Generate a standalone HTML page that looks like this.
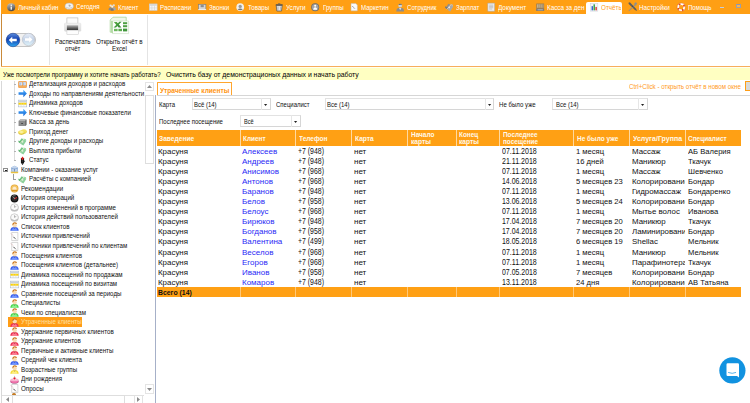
<!DOCTYPE html>
<html lang="ru"><head><meta charset="utf-8"><title>Утраченные клиенты</title>
<style>
html,body{margin:0;padding:0;}
body{width:750px;height:403px;overflow:hidden;background:#fff;position:relative;font-family:"Liberation Sans",sans-serif;}
.t{position:absolute;white-space:nowrap;transform-origin:0 50%;}
svg{position:absolute;overflow:visible;}
.cell{position:absolute;overflow:hidden;white-space:nowrap;}
</style></head><body>

<div style="position:absolute;left:1px;top:0px;width:749px;height:14.2px;background:#FF9F14;"></div>
<div style="position:absolute;left:585.8px;top:1.6px;width:36px;height:13px;background:#fff;border-radius:2px 2px 0 0;"></div>
<span class="t " style="left:17.6px;top:4px;font-size:7.12px;line-height:8px;color:#FFFFFF;transform:scaleX(0.8716);">Личный кабин</span>
<span class="t " style="left:75.5px;top:3px;font-size:7.12px;line-height:8px;color:#FFFFFF;transform:scaleX(0.8685);">Сегодня</span>
<span class="t " style="left:118.4px;top:4px;font-size:7.12px;line-height:8px;color:#FFFFFF;transform:scaleX(0.8663);">Клиент</span>
<span class="t " style="left:159.6px;top:4px;font-size:7.12px;line-height:8px;color:#FFFFFF;transform:scaleX(0.8840);">Расписани</span>
<span class="t " style="left:209.3px;top:4px;font-size:7.12px;line-height:8px;color:#FFFFFF;transform:scaleX(0.8788);">Звонки</span>
<span class="t " style="left:247.5px;top:4px;font-size:7.12px;line-height:8px;color:#FFFFFF;transform:scaleX(0.8656);">Товары</span>
<span class="t " style="left:285.9px;top:4px;font-size:7.12px;line-height:8px;color:#FFFFFF;transform:scaleX(0.8952);">Услуги</span>
<span class="t " style="left:322.7px;top:4px;font-size:7.12px;line-height:8px;color:#FFFFFF;transform:scaleX(0.8683);">Группы</span>
<span class="t " style="left:360.5px;top:4px;font-size:7.12px;line-height:8px;color:#FFFFFF;transform:scaleX(0.8620);">Маркетин</span>
<span class="t " style="left:406.7px;top:4px;font-size:7.12px;line-height:8px;color:#FFFFFF;transform:scaleX(0.8529);">Сотрудник</span>
<span class="t " style="left:455.5px;top:4px;font-size:7.12px;line-height:8px;color:#FFFFFF;transform:scaleX(0.8536);">Зарплат</span>
<span class="t " style="left:498px;top:4px;font-size:7.12px;line-height:8px;color:#FFFFFF;transform:scaleX(0.8928);">Документ</span>
<span class="t " style="left:546.7px;top:4px;font-size:7.12px;line-height:8px;color:#FFFFFF;transform:scaleX(0.8841);">Касса за ден</span>
<span class="t " style="left:639.3px;top:4px;font-size:7.12px;line-height:8px;color:#FFFFFF;transform:scaleX(0.8822);">Настройки</span>
<span class="t " style="left:688px;top:4px;font-size:7.12px;line-height:8px;color:#FFFFFF;transform:scaleX(0.8546);">Помощь</span>
<div style="position:absolute;left:600.8px;top:0;width:20.7px;height:14px;overflow:hidden;">
<span class="t " style="left:0px;top:4px;font-size:7.12px;line-height:8px;color:#FF9D16;transform:scaleX(0.8848);">Отчёты</span>
</div>
<svg style="left:6.9px;top:3.1px" width="8.4" height="8.4" viewBox="0 0 16 16"><defs><linearGradient id="gi" x1="0" y1="0" x2="0.3" y2="1"><stop offset="0" stop-color="#C8C8C8"/><stop offset="0.5" stop-color="#8A8A8A"/><stop offset="1" stop-color="#4E4E4E"/></linearGradient></defs><circle cx="8" cy="8" r="7.700" fill="url(#gi)"/><rect x="6.900" y="6.800" width="2.400" height="6" fill="#fff"/><circle cx="8.100" cy="4.300" r="1.400" fill="#fff"/></svg>
<svg style="left:64.8px;top:2.1px" width="8.4" height="8.4" viewBox="0 0 16 16"><ellipse cx="8" cy="8" rx="8" ry="6" fill="#F2F2F2" stroke="#B0B0B0" stroke-width="1"/><path d="M8 8V5M8 8l3-1" stroke="#777" stroke-width="1.200" fill="none"/><path d="M2 10q6 4 12 0" stroke="#C8C8C8" stroke-width="1.500" fill="none"/></svg>
<svg style="left:107.6px;top:3.3px" width="8.4" height="8.4" viewBox="0 0 16 16"><circle cx="5" cy="5" r="2.200" fill="#E6E6E6"/><circle cx="11" cy="4.500" r="2.200" fill="#DADADA"/><path d="M1 14c0-4 1.500-6 4-6s4 2 4 6z" fill="#8A8A8A"/><path d="M7.500 14c0-4 1.500-6.500 4-6.500s3.500 2.500 3.500 6.500z" fill="#A5A5A5"/><circle cx="8" cy="7" r="2" fill="#F0F0F0"/><path d="M5 15c0-3 1-5 3-5s3 2 3 5z" fill="#777"/></svg>
<svg style="left:148.8px;top:2.9px" width="8.4" height="8.4" viewBox="0 0 16 16"><rect x="0.500" y="1.700" width="15" height="12.600" fill="#FCFCFC" stroke="#C2C2C2" stroke-width="1"/><rect x="1" y="2.200" width="14" height="3" fill="#D2D2D2"/><path d="M5.500 5v9M10.500 5v9M1 8.200h14M1 11.200h14" stroke="#C8C8C8" stroke-width="0.900"/></svg>
<svg style="left:198.0px;top:2.7px" width="8.4" height="8.4" viewBox="0 0 16 16"><rect x="1" y="2.500" width="14" height="9.500" fill="#D6D6D6" stroke="#7C7C7C" stroke-width="1.200"/><rect x="5" y="4" width="6" height="4" fill="#8A8A8A"/><rect x="0.500" y="11.500" width="15" height="2" fill="#F0F0F0"/></svg>
<svg style="left:235.8px;top:3.3px" width="8.4" height="8.4" viewBox="0 0 16 16"><circle cx="8" cy="8" r="7.300" fill="#F0F0F0"/><circle cx="8" cy="6.500" r="3.200" fill="#9A9A9A"/><path d="M3 12q5 3.500 10 0q-5 -3-10 0z" fill="#777"/></svg>
<svg style="left:274.5px;top:3.0px" width="8.4" height="8.4" viewBox="0 0 16 16"><path d="M2.300 4.500h11.400l-1.200 10.800h-9z" fill="#DADADA" stroke="#505050" stroke-width="1.300"/><rect x="1.300" y="2.600" width="13.400" height="2.200" rx="0.600" fill="#505050"/><rect x="5.800" y="0.800" width="4.400" height="2" fill="#606060"/><path d="M6 7v6M10 7v6" stroke="#8A8A8A" stroke-width="1"/><path d="M8 6.500v7" stroke="#F4F4F4" stroke-width="1.600"/></svg>
<svg style="left:311.3px;top:3.1px" width="8.4" height="8.4" viewBox="0 0 16 16"><circle cx="8" cy="8" r="7.600" fill="#6A6A6A"/><circle cx="8" cy="8" r="6.200" fill="#A2A2A2"/><circle cx="8" cy="5.300" r="1.900" fill="#fff"/><path d="M4.300 12.800c0-3.200 1.500-4.800 3.700-4.800s3.700 1.600 3.700 4.800z" fill="#fff"/></svg>
<svg style="left:350.0px;top:3.1px" width="8.4" height="8.4" viewBox="0 0 16 16"><path d="M2 1h9l3 3v11H2z" fill="#FBFBFB" stroke="#BDBDBD" stroke-width="0.900"/><path d="M4.500 6l3 3" stroke="#666" stroke-width="1.400"/><path d="M7 10.500h3" stroke="#999" stroke-width="1"/></svg>
<svg style="left:395.5px;top:2.9px" width="8.4" height="8.4" viewBox="0 0 16 16"><circle cx="8" cy="4.800" r="3.600" fill="#D4D4D4"/><path d="M4.500 4.200a3.600 3.600 0 0 1 7 0q-3.500-2-7 0z" fill="#6A6A6A"/><path d="M0.500 16c0-5.300 3-7 7.500-7s7.500 1.700 7.500 7z" fill="#8C8C8C"/><path d="M5.800 9.500l2.200 4.500l2.200-4.500z" fill="#E2E2E2"/></svg>
<svg style="left:444.5px;top:3.0px" width="8.4" height="8.4" viewBox="0 0 16 16"><path d="M1 9.500L6.500 1.500l4.500 2.500L5.500 12.500z" fill="#8E8E8E"/><path d="M5 13.500L11 4l4.800 2.800L10 16z" fill="#A8A8A8"/><path d="M0.500 6l5.500 3l-1.500 3l-4.500-2.800z" fill="#7A7A7A"/><path d="M9.500 1.500l6 2l-1 3.500z" fill="#B8B8B8"/><path d="M3.500 12L11.500 3" stroke="#E4E4E4" stroke-width="1.300"/><circle cx="8" cy="8.500" r="1.600" fill="#E8E8E8"/></svg>
<svg style="left:487.2px;top:2.9px" width="8.4" height="8.4" viewBox="0 0 16 16"><path d="M1.500 0.300h13v15.400h-13z" fill="#EFEFEF" stroke="#A4A4A4" stroke-width="1"/><path d="M4 4h8M4 6.500h8M4 9h8M4 11.500h6" stroke="#A6A6A6" stroke-width="1.100"/></svg>
<svg style="left:536.0px;top:3.1px" width="8.4" height="8.4" viewBox="0 0 16 16"><rect x="0.500" y="1" width="15" height="14" fill="#9B7E55"/><rect x="2" y="2.500" width="12" height="6.500" fill="#C9B48E"/><path d="M5.500 2.500v6.500M9 2.500v6.500M12 2.500v6.500" stroke="#8A7048" stroke-width="1"/><rect x="0.500" y="11" width="15" height="4" fill="#7C7C7C"/><rect x="3" y="12.300" width="10" height="1.400" fill="#C8C8C8"/></svg>
<svg style="left:590.0px;top:3.3px" width="8.4" height="8.4" viewBox="0 0 16 16"><rect x="1" y="0.500" width="14" height="15" fill="#F4F6FA" stroke="#C8CCD6" stroke-width="0.800"/><rect x="3" y="6" width="2.600" height="8" fill="#2B5FCB"/><rect x="6.700" y="2.500" width="2.600" height="11.500" fill="#2E9B3A"/><rect x="10.400" y="7.500" width="2.600" height="6.500" fill="#D8332B"/></svg>
<svg style="left:627.8px;top:2.4px" width="9.6" height="9.6" viewBox="0 0 16 16"><path d="M0.800 1.200l2.400-0.700l10.300 10.800l1.700 3.700l-3.700-1.700L1.200 3.500z" fill="#5E5E5E"/><path d="M15.200 1.500l-2.800-1l-2.200 2.600l0.600 1.400l-9 9l-1.300 2l2.200-0.800l9.200-9l1.500 0.400z" fill="#8E8E8E"/><circle cx="8" cy="7.600" r="1.300" fill="#4A4A4A"/></svg>
<svg style="left:676.8px;top:3.2px" width="8.4" height="8.4" viewBox="0 0 16 16"><circle cx="8" cy="8" r="6" fill="none" stroke="#fff" stroke-width="3.600"/><path d="M3.800 3.800A6 6 0 0 1 6.500 2.200" stroke="#E24A1A" stroke-width="3.600" fill="none"/><path d="M12.200 3.800A6 6 0 0 1 13.800 6.500" stroke="#E24A1A" stroke-width="3.600" fill="none"/><path d="M12.200 12.200A6 6 0 0 1 9.500 13.800" stroke="#E24A1A" stroke-width="3.600" fill="none"/><path d="M3.800 12.200A6 6 0 0 1 2.200 9.500" stroke="#E24A1A" stroke-width="3.600" fill="none"/><circle cx="8" cy="8" r="7.800" fill="none" stroke="#D8541E" stroke-width="0.700"/></svg>
<div style="position:absolute;left:720.1px;top:7.2px;width:4.4px;height:1.2px;background:#C4CCDC;"></div>
<div style="position:absolute;left:735.7px;top:4.2px;width:4.9px;height:3.7px;border:0.7px solid #9A9FAE;border-top:1.4px solid #8A96B4;box-sizing:border-box;background:#FFB347;"></div>
<div style="position:absolute;left:0px;top:14.2px;width:750px;height:51.6px;background:#fff;"></div>
<div style="position:absolute;left:1px;top:14.2px;width:1.2px;height:52px;background:#C98A3A;"></div>
<div style="position:absolute;left:1px;top:65.6px;width:749px;height:1.1px;background:#F7AE5C;"></div>
<div style="position:absolute;left:49px;top:15px;width:0.8px;height:50px;background:#E4E4E4;"></div>
<div style="position:absolute;left:147px;top:15px;width:0.8px;height:50px;background:#E4E4E4;"></div>
<span class="t " style="left:54.5px;top:38px;font-size:7.01px;line-height:7px;color:#111;transform:scaleX(0.8802);">Распечатать</span>
<span class="t " style="left:64.9px;top:45px;font-size:7.01px;line-height:7px;color:#111;transform:scaleX(0.8692);">отчёт</span>
<span class="t " style="left:96.3px;top:38px;font-size:7.01px;line-height:7px;color:#111;transform:scaleX(0.8834);">Открыть отчёт в</span>
<span class="t " style="left:112.2px;top:45px;font-size:7.01px;line-height:7px;color:#111;transform:scaleX(0.8634);">Excel</span>
<div style="position:absolute;left:5.8px;top:32.6px;width:30.4px;height:14px;border-radius:7px;border:0.8px solid #C4C4C4;box-sizing:border-box;background:#F1F1F1;"></div>
<svg style="left:6px;top:32.9px" width="14" height="14" viewBox="0 0 28 28"><defs><linearGradient id="gb" x1="0" y1="0" x2="0" y2="1"><stop offset="0" stop-color="#5E8FE0"/><stop offset="0.45" stop-color="#1140B0"/><stop offset="1" stop-color="#2FA8F0"/></linearGradient></defs><circle cx="14" cy="14" r="13.500" fill="url(#gb)" stroke="#0C2E86" stroke-width="1"/><path d="M5.500 14l7-6.500v4h9v5h-9v4z" fill="#fff"/></svg>
<svg style="left:22.1px;top:33.4px" width="13" height="13" viewBox="0 0 26 26"><defs><linearGradient id="gf" x1="0" y1="0" x2="0" y2="1"><stop offset="0" stop-color="#E8EEF8"/><stop offset="0.5" stop-color="#C4D2E6"/><stop offset="1" stop-color="#DDF3FB"/></linearGradient></defs><circle cx="13" cy="13" r="12.300" fill="url(#gf)" stroke="#B4BBC6" stroke-width="1.200"/><path d="M21 13l-6.500-6v3.700H6v4.600h8.500V19z" fill="#fff"/></svg>
<svg style="left:64px;top:17px" width="18" height="18" viewBox="0 0 180 180"><defs><linearGradient id="gp" x1="0" y1="0" x2="0" y2="1"><stop offset="0" stop-color="#D4D4D4"/><stop offset="0.35" stop-color="#8C8C8C"/><stop offset="1" stop-color="#2C2C2C"/></linearGradient><linearGradient id="gp2" x1="0" y1="0" x2="0" y2="1"><stop offset="0" stop-color="#F2F2F2"/><stop offset="1" stop-color="#DADADA"/></linearGradient></defs><rect x="29" y="9" width="110" height="62" fill="#FCFCFC" stroke="#B4B4B4" stroke-width="6"/><rect x="5" y="62" width="164" height="81" rx="8" fill="url(#gp2)" stroke="#D6D6D6" stroke-width="4"/><rect x="29" y="78" width="112" height="52" fill="url(#gp)"/><rect x="29" y="74" width="112" height="7" fill="#F4F4F4"/><rect x="29" y="132" width="118" height="42" fill="#FDFDFD" stroke="#C4C4C4" stroke-width="5"/></svg>
<svg style="left:109px;top:16px" width="21" height="19" viewBox="0 0 210 190"><defs><linearGradient id="gx" x1="0" y1="0" x2="1" y2="1"><stop offset="0" stop-color="#5FB04A"/><stop offset="1" stop-color="#2E7D2E"/></linearGradient></defs><path d="M12 40L40 12H172V150L150 162H12z" fill="#F0F8EC" stroke="#9FD08C" stroke-width="7"/><path d="M36 50H196V176H36z" fill="#FFFFFF" stroke="#BBD9B0" stroke-width="5"/><path d="M22 48L36 50V176L22 160z" fill="#A7D596"/><path d="M48 60L78 60L124 114L96 114z" fill="url(#gx)"/><path d="M104 58L126 58L70 116L46 116z" fill="#3F9A3A"/><rect x="140" y="62" width="42" height="20" fill="#4FA044"/><rect x="140" y="92" width="42" height="20" fill="#4FA044"/><rect x="50" y="128" width="36" height="24" fill="#6DB85E"/><rect x="94" y="128" width="36" height="24" fill="#5AAC4C"/><rect x="140" y="126" width="42" height="28" fill="#3F953A"/></svg>
<div style="position:absolute;left:0px;top:68px;width:750px;height:12px;background:#FFFFC2;"></div>
<div style="position:absolute;left:0px;top:67px;width:750px;height:1px;background:#FFFFEE;"></div>
<span class="t " style="left:3.2px;top:71px;font-size:7.01px;line-height:7px;color:#000;transform:scaleX(0.8839);">Уже посмотрели программу и хотите начать работать?</span>
<span class="t " style="left:166px;top:70px;font-size:7.54px;line-height:9px;color:#000;transform:scaleX(0.9100);">Очистить базу от демонстрационых данных и начать работу</span>
<div style="position:absolute;left:1px;top:80.5px;width:0.7px;height:325px;background:#D8D8D8;"></div>
<div style="position:absolute;left:155.4px;top:95px;width:0.9px;height:310px;background:#A6B0C8;"></div>
<div style="position:absolute;left:8.4px;top:317.45px;width:73.4px;height:9.2px;background:#FF9D16;"></div>
<svg style="left:17.5px;top:79.8px" width="9" height="9" viewBox="0 0 16 16"><rect x="0.500" y="2.300" width="15" height="11.400" rx="0.800" fill="#EC8C28"/><rect x="2" y="3.800" width="5.600" height="6" fill="#D4E2F6"/><rect x="8.400" y="3.800" width="5.600" height="6" fill="#D4E2F6"/><rect x="3" y="4.500" width="1.500" height="4.500" fill="#8FB0E0"/><rect x="9.400" y="4.500" width="1.500" height="4.500" fill="#8FB0E0"/><rect x="1.500" y="10.800" width="13" height="1.200" fill="#FFC070"/></svg>
<svg style="left:17.5px;top:89.31px" width="9" height="9" viewBox="0 0 16 16"><defs><linearGradient id="ga" x1="0" y1="0" x2="0" y2="1"><stop offset="0" stop-color="#4DB0FF"/><stop offset="1" stop-color="#0F5FD0"/></linearGradient></defs><path d="M1 5.600h8.500V1.300L15.800 8l-6.300 6.700v-4.300H1z" fill="url(#ga)"/></svg>
<svg style="left:17.5px;top:98.82px" width="9" height="9" viewBox="0 0 16 16"><rect x="0.500" y="2" width="15" height="12" fill="#FFFFFF" stroke="#A8B6CA" stroke-width="1"/><rect x="1" y="2.500" width="14" height="3.300" fill="#C6D0DE"/><rect x="1" y="6.500" width="14" height="3.800" fill="#FFD500"/><path d="M5.600 2.500v11M10.400 2.500v11" stroke="#E4D9B8" stroke-width="0.900"/><path d="M1 6.200h14M1 10.600h14" stroke="#D8DEE8" stroke-width="0.700"/></svg>
<svg style="left:17.5px;top:108.34px" width="9" height="9" viewBox="0 0 16 16"><defs><linearGradient id="ga" x1="0" y1="0" x2="0" y2="1"><stop offset="0" stop-color="#4DB0FF"/><stop offset="1" stop-color="#0F5FD0"/></linearGradient></defs><path d="M1 5.600h8.500V1.300L15.800 8l-6.300 6.700v-4.300H1z" fill="url(#ga)"/></svg>
<svg style="left:17.5px;top:117.85px" width="9" height="9" viewBox="0 0 16 16"><path d="M1 5.500L4 2.800h11v9.700L12.500 14H1z" fill="#8C8C8C"/><path d="M1 5.500L4 2.800h11l-2.500 2.700z" fill="#B4B4B4"/><path d="M12.500 5.500L15 2.800v9.700L12.500 14z" fill="#6E6E6E"/><rect x="6" y="9" width="2.500" height="1.600" fill="#2E2E2E"/></svg>
<svg style="left:17.5px;top:127.36px" width="9" height="9" viewBox="0 0 16 16"><ellipse cx="10.500" cy="8.500" rx="5" ry="3.300" fill="#D8B818"/><ellipse cx="10.500" cy="7.500" rx="5" ry="3.300" fill="#F4E060"/><ellipse cx="6" cy="10.200" rx="5.300" ry="3.400" fill="#D0B010"/><ellipse cx="6" cy="9" rx="5.300" ry="3.400" fill="#F6E468"/><ellipse cx="6" cy="8.800" rx="3.200" ry="1.800" fill="#FBF0A0"/></svg>
<svg style="left:17.5px;top:136.87px" width="9" height="9" viewBox="0 0 16 16"><path d="M1.500 9.500L6.500 2l4 2.500L5.500 12z" fill="#74C486"/><path d="M5 12.500L10.500 4l4.500 2.500L9.500 15z" fill="#8CD09A"/><path d="M1 6l5 3l-1.500 2.500l-4-2.500z" fill="#62B676"/><path d="M9 2.500l5.500 1.500l-1 3z" fill="#9AD8A6"/><path d="M3.500 11.500L11 3" stroke="#F0F0D0" stroke-width="1.300"/><circle cx="8" cy="8.500" r="1.600" fill="#E4F4DE"/></svg>
<svg style="left:17.5px;top:146.38px" width="9" height="9" viewBox="0 0 16 16"><path d="M1.500 9.500L6.500 2l4 2.500L5.500 12z" fill="#74C486"/><path d="M5 12.500L10.500 4l4.500 2.500L9.500 15z" fill="#8CD09A"/><path d="M1 6l5 3l-1.500 2.500l-4-2.500z" fill="#62B676"/><path d="M9 2.500l5.500 1.500l-1 3z" fill="#9AD8A6"/><path d="M3.500 11.500L11 3" stroke="#F0F0D0" stroke-width="1.300"/><circle cx="8" cy="8.500" r="1.600" fill="#E4F4DE"/></svg>
<svg style="left:17.5px;top:155.9px" width="9" height="9" viewBox="0 0 16 16"><rect x="5.200" y="3.500" width="5.600" height="10" rx="1" fill="#151515"/><rect x="7" y="13" width="2" height="2.500" fill="#151515"/><path d="M5.500 4.500L8 1l2.800 3.500z" fill="#E01818"/><circle cx="8" cy="5.300" r="1.600" fill="#E82020"/><circle cx="8" cy="9" r="1.300" fill="#3A3A3A"/><rect x="10.500" y="8.500" width="2" height="1.500" fill="#151515"/></svg>
<svg style="left:9.5px;top:165.41px" width="9" height="9" viewBox="0 0 16 16"><path d="M2 4.500L8 1.500l6 3V12H2z" fill="#8AAAD4"/><path d="M2 4.500L8 1.500l6 3L8 6.500z" fill="#C4D6EE"/><path d="M4 7v4M6 7.500v4M10 7.500v4M12 7v4" stroke="#F2F6FC" stroke-width="1.100"/><path d="M8 6.500V12" stroke="#5C7CAC" stroke-width="0.800"/><path d="M0.800 12h14.400l-1.500 2.500H2.300z" fill="#E8C040"/></svg>
<svg style="left:17.5px;top:174.92px" width="9" height="9" viewBox="0 0 16 16"><path d="M1.500 9.500L6.500 2l4 2.500L5.500 12z" fill="#74C486"/><path d="M5 12.500L10.500 4l4.500 2.500L9.500 15z" fill="#8CD09A"/><path d="M1 6l5 3l-1.500 2.500l-4-2.500z" fill="#62B676"/><path d="M9 2.500l5.500 1.500l-1 3z" fill="#9AD8A6"/><path d="M3.500 11.500L11 3" stroke="#F0F0D0" stroke-width="1.300"/><circle cx="8" cy="8.500" r="1.600" fill="#E4F4DE"/></svg>
<svg style="left:9.5px;top:184.43px" width="9" height="9" viewBox="0 0 16 16"><circle cx="8" cy="8" r="7" fill="#E6A83A"/><circle cx="8" cy="8" r="5.600" fill="#F4C868"/><path d="M4.300 10.500c0-3.500 1.500-5.500 3.700-5.500s3.700 2 3.700 5.500z" fill="#FCEBD0"/><rect x="3.500" y="10.300" width="9" height="2.200" rx="0.500" fill="#D89828"/></svg>
<svg style="left:9.5px;top:193.94px" width="9" height="9" viewBox="0 0 16 16"><circle cx="8" cy="8" r="7" fill="#0E0E0E"/><circle cx="8" cy="8" r="5" fill="#2C2C2C"/><path d="M3 5.500a6 6 0 0 1 7-3" stroke="#9A9A9A" stroke-width="1" fill="none"/><path d="M7.500 8.800L12.500 6" stroke="#F02020" stroke-width="1.600"/><path d="M8 8.500L6 5" stroke="#fff" stroke-width="1"/></svg>
<svg style="left:9.5px;top:203.46px" width="9" height="9" viewBox="0 0 16 16"><ellipse cx="8" cy="8.300" rx="7.400" ry="7" fill="#C4C4C4"/><ellipse cx="8" cy="7.600" rx="6.600" ry="6.100" fill="#FAFAFA" stroke="#B0B0B0" stroke-width="0.800"/><path d="M8 7.800V4M8 7.800l3.200 -2" stroke="#8A8A8A" stroke-width="1.100" fill="none"/><path d="M2.500 11.500q5.500 4 11 0" stroke="#A8A8A8" stroke-width="1.200" fill="none"/></svg>
<svg style="left:9.5px;top:212.97px" width="9" height="9" viewBox="0 0 16 16"><ellipse cx="8" cy="8.300" rx="7.400" ry="7" fill="#C4C4C4"/><ellipse cx="8" cy="7.600" rx="6.600" ry="6.100" fill="#FAFAFA" stroke="#B0B0B0" stroke-width="0.800"/><path d="M8 7.800V4M8 7.800l3.200 -2" stroke="#8A8A8A" stroke-width="1.100" fill="none"/><path d="M2.500 11.500q5.500 4 11 0" stroke="#A8A8A8" stroke-width="1.200" fill="none"/></svg>
<svg style="left:9.5px;top:222.48px" width="9" height="9" viewBox="0 0 16 16"><path d="M0.500 15.500c0.300-3.500 2-5.500 4.500-6h6c2.500 0.500 4.200 2.500 4.500 6z" fill="#3C62F0"/><path d="M3 15.500c0.500-2.500 1.500-4 3-4.500h4c1.500 0.500 2.500 2 3 4.500z" fill="#7FA0FF" opacity="0.8"/><path d="M6 9.500l2.200 2.500l2.200-2.500z" fill="#1B3FB8"/><ellipse cx="8.400" cy="5.600" rx="3.700" ry="4" fill="#FADCB4"/><path d="M4.300 6.200c-0.600-3.600 1.600-5.600 4.400-5.600c2.400 0 3.700 1.300 3.600 3c-1.800-0.200-3.300-0.600-4.600-1.600c-0.800 1.400-2 2.800-3.400 4.200z" fill="#C8761C"/></svg>
<svg style="left:9.5px;top:231.99px" width="9" height="9" viewBox="0 0 16 16"><path d="M3 0.800h11v14.400H3z" fill="#FEFEFE" stroke="#B4B4B4" stroke-width="0.900"/><path d="M1 2.500l5 4" stroke="#D8A8A8" stroke-width="0.900"/><path d="M6 8.500l3.500 3.500" stroke="#303030" stroke-width="1.600"/><path d="M10 12.500l1 1" stroke="#888" stroke-width="1"/></svg>
<svg style="left:9.5px;top:241.5px" width="9" height="9" viewBox="0 0 16 16"><path d="M3 0.800h11v14.400H3z" fill="#FEFEFE" stroke="#B4B4B4" stroke-width="0.900"/><path d="M1 2.500l5 4" stroke="#D8A8A8" stroke-width="0.900"/><path d="M6 8.500l3.500 3.500" stroke="#303030" stroke-width="1.600"/><path d="M10 12.500l1 1" stroke="#888" stroke-width="1"/></svg>
<svg style="left:9.5px;top:251.02px" width="9" height="9" viewBox="0 0 16 16"><path d="M0.500 15.500c0.300-3.500 2-5.500 4.500-6h6c2.500 0.500 4.200 2.500 4.500 6z" fill="#3C62F0"/><path d="M3 15.500c0.500-2.500 1.500-4 3-4.500h4c1.500 0.500 2.500 2 3 4.500z" fill="#7FA0FF" opacity="0.8"/><path d="M6 9.500l2.200 2.500l2.200-2.500z" fill="#1B3FB8"/><ellipse cx="8.400" cy="5.600" rx="3.700" ry="4" fill="#FADCB4"/><path d="M4.300 6.200c-0.600-3.600 1.600-5.600 4.400-5.600c2.400 0 3.700 1.300 3.600 3c-1.800-0.200-3.300-0.600-4.600-1.600c-0.800 1.400-2 2.800-3.400 4.200z" fill="#C8761C"/></svg>
<svg style="left:9.5px;top:260.53px" width="9" height="9" viewBox="0 0 16 16"><path d="M0.500 15.500c0.300-3.500 2-5.500 4.500-6h6c2.500 0.500 4.200 2.500 4.500 6z" fill="#3C62F0"/><path d="M3 15.500c0.500-2.500 1.500-4 3-4.500h4c1.500 0.500 2.500 2 3 4.500z" fill="#7FA0FF" opacity="0.8"/><path d="M6 9.500l2.200 2.500l2.200-2.500z" fill="#1B3FB8"/><ellipse cx="8.400" cy="5.600" rx="3.700" ry="4" fill="#FADCB4"/><path d="M4.300 6.200c-0.600-3.600 1.600-5.600 4.400-5.600c2.400 0 3.700 1.300 3.600 3c-1.800-0.200-3.300-0.600-4.600-1.600c-0.800 1.400-2 2.800-3.400 4.200z" fill="#C8761C"/></svg>
<svg style="left:9.5px;top:270.04px" width="9" height="9" viewBox="0 0 16 16"><rect x="0.500" y="2" width="15" height="12" fill="#FFFFFF" stroke="#A8B6CA" stroke-width="1"/><rect x="1" y="2.500" width="14" height="3.300" fill="#C6D0DE"/><rect x="1" y="6.500" width="14" height="3.800" fill="#FFD500"/><path d="M5.600 2.500v11M10.400 2.500v11" stroke="#E4D9B8" stroke-width="0.900"/><path d="M1 6.200h14M1 10.600h14" stroke="#D8DEE8" stroke-width="0.700"/></svg>
<svg style="left:9.5px;top:279.55px" width="9" height="9" viewBox="0 0 16 16"><rect x="0.500" y="2" width="15" height="12" fill="#FFFFFF" stroke="#A8B6CA" stroke-width="1"/><rect x="1" y="2.500" width="14" height="3.300" fill="#C6D0DE"/><rect x="1" y="6.500" width="14" height="3.800" fill="#FFD500"/><path d="M5.600 2.500v11M10.400 2.500v11" stroke="#E4D9B8" stroke-width="0.900"/><path d="M1 6.200h14M1 10.600h14" stroke="#D8DEE8" stroke-width="0.700"/></svg>
<svg style="left:9.5px;top:289.06px" width="9" height="9" viewBox="0 0 16 16"><path d="M0.500 15.500c0.300-3.500 2-5.500 4.500-6h6c2.500 0.500 4.200 2.500 4.500 6z" fill="#3C62F0"/><path d="M3 15.500c0.500-2.500 1.500-4 3-4.500h4c1.500 0.500 2.500 2 3 4.500z" fill="#7FA0FF" opacity="0.8"/><path d="M6 9.500l2.200 2.500l2.200-2.500z" fill="#1B3FB8"/><ellipse cx="8.400" cy="5.600" rx="3.700" ry="4" fill="#FADCB4"/><path d="M4.300 6.200c-0.600-3.600 1.600-5.600 4.400-5.600c2.400 0 3.700 1.300 3.600 3c-1.800-0.200-3.300-0.600-4.600-1.600c-0.800 1.400-2 2.800-3.400 4.200z" fill="#C8761C"/></svg>
<svg style="left:9.5px;top:298.58px" width="9" height="9" viewBox="0 0 16 16"><path d="M0.500 15.500c0.300-3.500 2-5.500 4.500-6h6c2.500 0.500 4.200 2.500 4.500 6z" fill="#4FD94F"/><path d="M3 15.500c0.500-2.500 1.500-4 3-4.500h4c1.500 0.500 2.500 2 3 4.500z" fill="#9CF59C" opacity="0.8"/><path d="M6 9.500l2.200 2.500l2.200-2.500z" fill="#2A9A2A"/><ellipse cx="8.400" cy="5.600" rx="3.700" ry="4" fill="#FADCB4"/><path d="M4.300 6.200c-0.600-3.600 1.600-5.600 4.400-5.600c2.400 0 3.700 1.300 3.600 3c-1.800-0.200-3.300-0.600-4.600-1.600c-0.800 1.400-2 2.800-3.400 4.200z" fill="#C8761C"/></svg>
<svg style="left:9.5px;top:308.09px" width="9" height="9" viewBox="0 0 16 16"><path d="M0.500 15.500c0.300-3.500 2-5.500 4.500-6h6c2.500 0.500 4.200 2.500 4.500 6z" fill="#4FD94F"/><path d="M3 15.500c0.500-2.500 1.500-4 3-4.500h4c1.500 0.500 2.500 2 3 4.500z" fill="#9CF59C" opacity="0.8"/><path d="M6 9.500l2.200 2.500l2.200-2.500z" fill="#2A9A2A"/><ellipse cx="8.400" cy="5.600" rx="3.700" ry="4" fill="#FADCB4"/><path d="M4.300 6.200c-0.600-3.600 1.600-5.600 4.400-5.600c2.400 0 3.700 1.300 3.600 3c-1.800-0.200-3.300-0.600-4.600-1.600c-0.800 1.400-2 2.800-3.400 4.200z" fill="#C8761C"/></svg>
<svg style="left:9.5px;top:317.6px" width="9" height="9" viewBox="0 0 16 16"><path d="M0.500 15.500c0.300-3.500 2-5.500 4.500-6h6c2.500 0.500 4.200 2.500 4.500 6z" fill="#EE3352"/><path d="M3 15.500c0.500-2.500 1.500-4 3-4.500h4c1.500 0.500 2.500 2 3 4.500z" fill="#FF8CA0" opacity="0.8"/><path d="M6 9.500l2.200 2.500l2.200-2.500z" fill="#B01030"/><ellipse cx="8.400" cy="5.600" rx="3.700" ry="4" fill="#FADCB4"/><path d="M4.300 6.200c-0.600-3.600 1.600-5.600 4.400-5.600c2.400 0 3.700 1.300 3.600 3c-1.800-0.200-3.300-0.600-4.600-1.600c-0.800 1.400-2 2.800-3.400 4.200z" fill="#C8761C"/></svg>
<svg style="left:9.5px;top:327.11px" width="9" height="9" viewBox="0 0 16 16"><path d="M0.500 15.500c0.300-3.500 2-5.500 4.500-6h6c2.500 0.500 4.200 2.500 4.500 6z" fill="#EE3352"/><path d="M3 15.500c0.500-2.500 1.500-4 3-4.500h4c1.500 0.500 2.500 2 3 4.500z" fill="#FF8CA0" opacity="0.8"/><path d="M6 9.500l2.200 2.500l2.200-2.500z" fill="#B01030"/><ellipse cx="8.400" cy="5.600" rx="3.700" ry="4" fill="#FADCB4"/><path d="M4.300 6.200c-0.600-3.600 1.600-5.600 4.400-5.600c2.400 0 3.700 1.300 3.600 3c-1.800-0.200-3.300-0.600-4.600-1.600c-0.800 1.400-2 2.800-3.400 4.200z" fill="#C8761C"/></svg>
<svg style="left:9.5px;top:336.62px" width="9" height="9" viewBox="0 0 16 16"><path d="M0.500 15.500c0.300-3.500 2-5.500 4.500-6h6c2.500 0.500 4.200 2.500 4.500 6z" fill="#EE3352"/><path d="M3 15.500c0.500-2.500 1.500-4 3-4.500h4c1.500 0.500 2.500 2 3 4.500z" fill="#FF8CA0" opacity="0.8"/><path d="M6 9.500l2.200 2.500l2.200-2.500z" fill="#B01030"/><ellipse cx="8.400" cy="5.600" rx="3.700" ry="4" fill="#FADCB4"/><path d="M4.300 6.200c-0.600-3.600 1.600-5.600 4.400-5.600c2.400 0 3.700 1.300 3.600 3c-1.800-0.200-3.300-0.600-4.600-1.600c-0.800 1.400-2 2.800-3.400 4.200z" fill="#C8761C"/></svg>
<svg style="left:9.5px;top:346.14px" width="9" height="9" viewBox="0 0 16 16"><path d="M0.500 15.500c0.300-3.500 2-5.500 4.500-6h6c2.500 0.500 4.200 2.500 4.500 6z" fill="#EE3352"/><path d="M3 15.500c0.500-2.500 1.500-4 3-4.500h4c1.500 0.500 2.500 2 3 4.500z" fill="#FF8CA0" opacity="0.8"/><path d="M6 9.500l2.200 2.500l2.200-2.500z" fill="#B01030"/><ellipse cx="8.400" cy="5.600" rx="3.700" ry="4" fill="#FADCB4"/><path d="M4.300 6.200c-0.600-3.600 1.600-5.600 4.400-5.600c2.400 0 3.700 1.300 3.600 3c-1.800-0.200-3.300-0.600-4.600-1.600c-0.800 1.400-2 2.800-3.400 4.200z" fill="#C8761C"/></svg>
<svg style="left:9.5px;top:355.65px" width="9" height="9" viewBox="0 0 16 16"><path d="M0.500 15.500c0.300-3.500 2-5.500 4.500-6h6c2.500 0.500 4.200 2.500 4.500 6z" fill="#3C62F0"/><path d="M3 15.500c0.500-2.500 1.500-4 3-4.500h4c1.500 0.500 2.500 2 3 4.500z" fill="#7FA0FF" opacity="0.8"/><path d="M6 9.500l2.200 2.500l2.200-2.500z" fill="#1B3FB8"/><ellipse cx="8.400" cy="5.600" rx="3.700" ry="4" fill="#FADCB4"/><path d="M4.300 6.200c-0.600-3.600 1.600-5.600 4.400-5.600c2.400 0 3.700 1.300 3.600 3c-1.800-0.200-3.300-0.600-4.600-1.600c-0.800 1.400-2 2.800-3.400 4.200z" fill="#C8761C"/></svg>
<svg style="left:9.5px;top:365.16px" width="9" height="9" viewBox="0 0 16 16"><path d="M0.500 15.500c0.300-3.500 2-5.500 4.500-6h6c2.500 0.500 4.200 2.500 4.500 6z" fill="#F5DC3C"/><path d="M3 15.500c0.500-2.500 1.500-4 3-4.500h4c1.500 0.500 2.500 2 3 4.500z" fill="#FFF29A" opacity="0.8"/><path d="M6 9.500l2.200 2.500l2.200-2.500z" fill="#B89A10"/><ellipse cx="8.400" cy="5.600" rx="3.700" ry="4" fill="#FADCB4"/><path d="M4.300 6.200c-0.600-3.600 1.600-5.600 4.400-5.600c2.400 0 3.700 1.300 3.600 3c-1.800-0.200-3.300-0.600-4.600-1.600c-0.800 1.400-2 2.800-3.400 4.200z" fill="#C8761C"/></svg>
<svg style="left:9.5px;top:374.67px" width="9" height="9" viewBox="0 0 16 16"><ellipse cx="8" cy="11.800" rx="7.200" ry="3.200" fill="#8A3A6A"/><path d="M1 8.500h14v3a7 3 0 0 1-14 0z" fill="#EE6FA8"/><ellipse cx="8" cy="8.500" rx="7" ry="2.800" fill="#F8B4D0"/><path d="M5 8l1.500-3.500h3L11 8z" fill="#FFFFFF"/><circle cx="8" cy="6" r="2" fill="#E01830"/><path d="M8 4V1.500" stroke="#7A9A5A" stroke-width="0.800"/></svg>
<svg style="left:9.5px;top:384.18px" width="9" height="9" viewBox="0 0 16 16"><path d="M3 0.800h11v14.400H3z" fill="#FEFEFE" stroke="#B4B4B4" stroke-width="0.900"/><path d="M1 2.500l5 4" stroke="#D8A8A8" stroke-width="0.900"/><path d="M6 8.500l3.500 3.500" stroke="#303030" stroke-width="1.600"/><path d="M10 12.500l1 1" stroke="#888" stroke-width="1"/></svg>
<span class="t " style="left:28.6px;top:80px;font-size:7.01px;line-height:7px;color:#111;transform:scaleX(0.8845);">Детализация доходов и расходов</span>
<span class="t " style="left:28.6px;top:90px;font-size:7.01px;line-height:7px;color:#111;transform:scaleX(0.8845);">Доходы по направлениям деятельности</span>
<span class="t " style="left:28.6px;top:99px;font-size:7.01px;line-height:7px;color:#111;transform:scaleX(0.8845);">Динамика доходов</span>
<span class="t " style="left:28.6px;top:109px;font-size:7.01px;line-height:7px;color:#111;transform:scaleX(0.8845);">Ключевые финансовые показатели</span>
<span class="t " style="left:28.6px;top:118px;font-size:7.01px;line-height:7px;color:#111;transform:scaleX(0.8845);">Касса за день</span>
<span class="t " style="left:28.6px;top:128px;font-size:7.01px;line-height:7px;color:#111;transform:scaleX(0.8845);">Приход денег</span>
<span class="t " style="left:28.6px;top:137px;font-size:7.01px;line-height:7px;color:#111;transform:scaleX(0.8845);">Другие доходы и расходы</span>
<span class="t " style="left:28.6px;top:147px;font-size:7.01px;line-height:7px;color:#111;transform:scaleX(0.8845);">Выплата прибыли</span>
<span class="t " style="left:28.6px;top:156px;font-size:7.01px;line-height:7px;color:#111;transform:scaleX(0.8845);">Статус</span>
<span class="t " style="left:20.6px;top:166px;font-size:7.01px;line-height:7px;color:#111;transform:scaleX(0.8845);">Компании - оказание услуг</span>
<span class="t " style="left:28.6px;top:175px;font-size:7.01px;line-height:7px;color:#111;transform:scaleX(0.8845);">Расчёты с компанией</span>
<span class="t " style="left:20.6px;top:185px;font-size:7.01px;line-height:7px;color:#111;transform:scaleX(0.8845);">Рекомендации</span>
<span class="t " style="left:20.6px;top:194px;font-size:7.01px;line-height:7px;color:#111;transform:scaleX(0.8845);">История операций</span>
<span class="t " style="left:20.6px;top:204px;font-size:7.01px;line-height:7px;color:#111;transform:scaleX(0.8845);">История изменений в программе</span>
<span class="t " style="left:20.6px;top:213px;font-size:7.01px;line-height:7px;color:#111;transform:scaleX(0.8845);">История действий пользователей</span>
<span class="t " style="left:20.6px;top:223px;font-size:7.01px;line-height:7px;color:#111;transform:scaleX(0.8845);">Список клиентов</span>
<span class="t " style="left:20.6px;top:232px;font-size:7.01px;line-height:7px;color:#111;transform:scaleX(0.8845);">Источники привлечений</span>
<span class="t " style="left:20.6px;top:242px;font-size:7.01px;line-height:7px;color:#111;transform:scaleX(0.8845);">Источники привлечений по клиентам</span>
<span class="t " style="left:20.6px;top:252px;font-size:7.01px;line-height:7px;color:#111;transform:scaleX(0.8845);">Посещения клиентов</span>
<span class="t " style="left:20.6px;top:261px;font-size:7.01px;line-height:7px;color:#111;transform:scaleX(0.8845);">Посещения клиентов (детальнее)</span>
<span class="t " style="left:20.6px;top:271px;font-size:7.01px;line-height:7px;color:#111;transform:scaleX(0.8845);">Динамика посещений по продажам</span>
<span class="t " style="left:20.6px;top:280px;font-size:7.01px;line-height:7px;color:#111;transform:scaleX(0.8845);">Динамика посещений по визитам</span>
<span class="t " style="left:20.6px;top:290px;font-size:7.01px;line-height:7px;color:#111;transform:scaleX(0.8845);">Сравнение посещений за периоды</span>
<span class="t " style="left:20.6px;top:299px;font-size:7.01px;line-height:7px;color:#111;transform:scaleX(0.8845);">Специалисты</span>
<span class="t " style="left:20.6px;top:309px;font-size:7.01px;line-height:7px;color:#111;transform:scaleX(0.8845);">Чеки по специалистам</span>
<span class="t " style="left:20.6px;top:318px;font-size:7.01px;line-height:7px;color:#FFE0A0;transform:scaleX(0.8845);">Утраченные клиенты</span>
<span class="t " style="left:20.6px;top:328px;font-size:7.01px;line-height:7px;color:#111;transform:scaleX(0.8845);">Удержание первичных клиентов</span>
<span class="t " style="left:20.6px;top:337px;font-size:7.01px;line-height:7px;color:#111;transform:scaleX(0.8845);">Удержание клиентов</span>
<span class="t " style="left:20.6px;top:347px;font-size:7.01px;line-height:7px;color:#111;transform:scaleX(0.8845);">Первичные и активные клиенты</span>
<span class="t " style="left:20.6px;top:356px;font-size:7.01px;line-height:7px;color:#111;transform:scaleX(0.8845);">Средний чек клиента</span>
<span class="t " style="left:20.6px;top:366px;font-size:7.01px;line-height:7px;color:#111;transform:scaleX(0.8845);">Возрастные группы</span>
<span class="t " style="left:20.6px;top:375px;font-size:7.01px;line-height:7px;color:#111;transform:scaleX(0.8845);">Дни рождения</span>
<span class="t " style="left:20.6px;top:385px;font-size:7.01px;line-height:7px;color:#111;transform:scaleX(0.8845);">Опросы</span>
<div style="position:absolute;left:14.1px;top:80.5px;width:0.6px;height:80.0px;background:#DCDCDC;"></div>
<div style="position:absolute;left:14.3px;top:84.2px;width:2.2px;height:0.7px;background:#B4B4B4;"></div>
<div style="position:absolute;left:14.3px;top:93.71px;width:2.2px;height:0.7px;background:#B4B4B4;"></div>
<div style="position:absolute;left:14.3px;top:103.22px;width:2.2px;height:0.7px;background:#B4B4B4;"></div>
<div style="position:absolute;left:14.3px;top:112.74px;width:2.2px;height:0.7px;background:#B4B4B4;"></div>
<div style="position:absolute;left:14.3px;top:122.25px;width:2.2px;height:0.7px;background:#B4B4B4;"></div>
<div style="position:absolute;left:14.3px;top:131.76px;width:2.2px;height:0.7px;background:#B4B4B4;"></div>
<div style="position:absolute;left:14.3px;top:141.27px;width:2.2px;height:0.7px;background:#B4B4B4;"></div>
<div style="position:absolute;left:14.3px;top:150.78px;width:2.2px;height:0.7px;background:#B4B4B4;"></div>
<div style="position:absolute;left:14.3px;top:160.3px;width:2.2px;height:0.7px;background:#B4B4B4;"></div>
<div style="position:absolute;left:13.1px;top:173.61px;width:0.7px;height:5.91px;background:#9A9A9A;"></div>
<div style="position:absolute;left:13.1px;top:179.22px;width:3px;height:0.7px;background:#9A9A9A;"></div>
<div style="position:absolute;left:3.1px;top:167.61px;width:5.2px;height:4.8px;border:0.8px solid #8E8E8E;background:#fff;box-sizing:border-box;"></div>
<div style="position:absolute;left:4.5px;top:169.66px;width:2.4px;height:0.7px;background:#222;"></div>
<div style="position:absolute;left:144.8px;top:81.6px;width:9.4px;height:9px;border:0.7px solid #E4E4E4;box-sizing:border-box;background:#fff;"></div>
<div style="position:absolute;left:144.8px;top:95px;width:8.8px;height:69px;border:0.7px solid #DEDEDE;box-sizing:border-box;background:#fff;"></div>
<div style="position:absolute;left:144.8px;top:384.4px;width:9.4px;height:9.3px;border:0.7px solid #E4E4E4;box-sizing:border-box;background:#fff;"></div>
<svg style="left:147px;top:84.5px" width="5" height="3" viewBox="0 0 5 3"><path d="M0 3L2.5 0L5 3Z" fill="#8A8A8A"/></svg>
<svg style="left:147px;top:387.5px" width="5" height="3" viewBox="0 0 5 3"><path d="M0 0L2.5 3L5 0Z" fill="#8A8A8A"/></svg>
<div style="position:absolute;left:1.7px;top:395px;width:142px;height:0.8px;background:#E0E0E0;"></div>
<div style="position:absolute;left:12.2px;top:393.2px;width:3.6px;height:1.8px;background:#C47A22;border-radius:1.8px 1.8px 0 0;"></div>
<div style="position:absolute;left:12px;top:395px;width:112.7px;height:9px;border:0.8px solid #DEDEDE;box-sizing:border-box;background:#fff;"></div>
<div style="position:absolute;left:134px;top:395px;width:9.3px;height:9px;border:0.8px solid #E2E2E2;box-sizing:border-box;background:#fff;"></div>
<svg style="left:5.6px;top:397.2px" width="3" height="5" viewBox="0 0 3 5"><path d="M3 0L0 2.5L3 5Z" fill="#8A8A8A"/></svg>
<svg style="left:137.4px;top:397.2px" width="3" height="5" viewBox="0 0 3 5"><path d="M0 0L3 2.5L0 5Z" fill="#8A8A8A"/></svg>
<div style="position:absolute;left:157px;top:95px;width:593px;height:0.9px;background:#D6D6D6;"></div>
<div style="position:absolute;left:157.2px;top:82.3px;width:74.6px;height:13.2px;border:1px solid #FFA52E;border-bottom:none;background:#fff;box-sizing:border-box;border-radius:1px 1px 0 0;"></div>
<span class="t " style="left:160px;top:86px;font-size:7.8px;line-height:9px;color:#FF9410;transform:scaleX(0.8419);font-weight:bold;">Утраченные клиенты</span>
<span class="t " style="left:629.2px;top:83px;font-size:7.01px;line-height:7px;color:#FF9A1E;transform:scaleX(0.8865);">Ctrl+Click - открыть отчёт в новом окне</span>
<div style="position:absolute;left:745px;top:81px;width:6px;height:9.5px;border:1px solid #FF9D16;background:#D8D8D8;box-sizing:border-box;"></div>
<span class="t " style="left:159px;top:100px;font-size:7.32px;line-height:9px;color:#111;transform:scaleX(0.8169);">Карта</span>
<div style="position:absolute;left:191.5px;top:98px;width:79.0px;height:12px;border:1px solid #E2E2E2;border-right-color:#D6D6D6;border-bottom-color:#D6D6D6;box-sizing:border-box;background:#fff;"></div>
<div style="position:absolute;left:260.5px;top:98px;width:1px;height:12px;background:#E6E6E6;"></div>
<svg style="left:263.9px;top:103.8px" width="3.2" height="1.9" viewBox="0 0 32 19"><path d="M0 0L16 19L32 0Z" fill="#222"/></svg>
<span class="t " style="left:193.9px;top:100px;font-size:7.32px;line-height:9px;color:#111;transform:scaleX(0.8169);">Всё (14)</span>
<span class="t " style="left:275.7px;top:100px;font-size:7.32px;line-height:9px;color:#111;transform:scaleX(0.8186);">Специалист</span>
<div style="position:absolute;left:325.3px;top:98px;width:169.2px;height:12px;border:1px solid #E2E2E2;border-right-color:#D6D6D6;border-bottom-color:#D6D6D6;box-sizing:border-box;background:#fff;"></div>
<div style="position:absolute;left:484.5px;top:98px;width:1px;height:12px;background:#E6E6E6;"></div>
<svg style="left:487.9px;top:103.8px" width="3.2" height="1.9" viewBox="0 0 32 19"><path d="M0 0L16 19L32 0Z" fill="#222"/></svg>
<span class="t " style="left:327.1px;top:100px;font-size:7.32px;line-height:9px;color:#111;transform:scaleX(0.8169);">Все (14)</span>
<span class="t " style="left:499.3px;top:100px;font-size:7.32px;line-height:9px;color:#111;transform:scaleX(0.8338);">Не было уже</span>
<div style="position:absolute;left:551.5px;top:98px;width:96.0px;height:12px;border:1px solid #E2E2E2;border-right-color:#D6D6D6;border-bottom-color:#D6D6D6;box-sizing:border-box;background:#fff;"></div>
<div style="position:absolute;left:637.5px;top:98px;width:1px;height:12px;background:#E6E6E6;"></div>
<svg style="left:640.9px;top:103.8px" width="3.2" height="1.9" viewBox="0 0 32 19"><path d="M0 0L16 19L32 0Z" fill="#222"/></svg>
<span class="t " style="left:556.0px;top:100px;font-size:7.32px;line-height:9px;color:#111;transform:scaleX(0.8169);">Все (14)</span>
<span class="t " style="left:159px;top:117px;font-size:7.32px;line-height:9px;color:#111;transform:scaleX(0.8243);">Последнее посещение</span>
<div style="position:absolute;left:240px;top:115px;width:60.7px;height:12px;border:1px solid #E2E2E2;border-right-color:#D6D6D6;border-bottom-color:#D6D6D6;box-sizing:border-box;background:#fff;"></div>
<div style="position:absolute;left:290.7px;top:115px;width:1px;height:12px;background:#E6E6E6;"></div>
<svg style="left:294.1px;top:120.8px" width="3.2" height="1.9" viewBox="0 0 32 19"><path d="M0 0L16 19L32 0Z" fill="#222"/></svg>
<span class="t " style="left:244.3px;top:117px;font-size:7.32px;line-height:9px;color:#111;transform:scaleX(0.7690);">Всё</span>
<div style="position:absolute;left:156.8px;top:130px;width:583.9px;height:16px;background:#FFA014;"></div>
<div style="position:absolute;left:240.29999999999998px;top:130px;width:0.8px;height:16px;background:#FFD9A0;"></div>
<div style="position:absolute;left:294.90000000000003px;top:130px;width:0.8px;height:16px;background:#FFD9A0;"></div>
<div style="position:absolute;left:350.90000000000003px;top:130px;width:0.8px;height:16px;background:#FFD9A0;"></div>
<div style="position:absolute;left:406.90000000000003px;top:130px;width:0.8px;height:16px;background:#FFD9A0;"></div>
<div style="position:absolute;left:455.5px;top:130px;width:0.8px;height:16px;background:#FFD9A0;"></div>
<div style="position:absolute;left:498.90000000000003px;top:130px;width:0.8px;height:16px;background:#FFD9A0;"></div>
<div style="position:absolute;left:573.1px;top:130px;width:0.8px;height:16px;background:#FFD9A0;"></div>
<div style="position:absolute;left:629.1px;top:130px;width:0.8px;height:16px;background:#FFD9A0;"></div>
<div style="position:absolute;left:685.1px;top:130px;width:0.8px;height:16px;background:#FFD9A0;"></div>
<span class="t " style="left:159.4px;top:134px;font-size:7.34px;line-height:9px;color:#FFF8EA;transform:scaleX(0.9038);font-weight:bold;">Заведение</span>
<span class="t " style="left:243.3px;top:134px;font-size:7.34px;line-height:9px;color:#FFF8EA;transform:scaleX(0.8771);font-weight:bold;">Клиент</span>
<span class="t " style="left:299.3px;top:134px;font-size:7.34px;line-height:9px;color:#FFF8EA;transform:scaleX(0.8912);font-weight:bold;">Телефон</span>
<span class="t " style="left:355.2px;top:134px;font-size:7.34px;line-height:9px;color:#FFF8EA;transform:scaleX(0.9075);font-weight:bold;">Карта</span>
<span class="t " style="left:410.8px;top:130px;font-size:7.23px;line-height:9px;color:#FFF8EA;transform:scaleX(0.8933);font-weight:bold;">Начало</span>
<span class="t " style="left:410.8px;top:137px;font-size:7.23px;line-height:9px;color:#FFF8EA;transform:scaleX(0.9227);font-weight:bold;">карты</span>
<span class="t " style="left:458.8px;top:130px;font-size:7.23px;line-height:9px;color:#FFF8EA;transform:scaleX(0.8852);font-weight:bold;">Конец</span>
<span class="t " style="left:458.8px;top:137px;font-size:7.23px;line-height:9px;color:#FFF8EA;transform:scaleX(0.9227);font-weight:bold;">карты</span>
<span class="t " style="left:502.5px;top:130px;font-size:7.23px;line-height:9px;color:#FFF8EA;transform:scaleX(0.8852);font-weight:bold;">Последнее</span>
<span class="t " style="left:502.5px;top:137px;font-size:7.23px;line-height:9px;color:#FFF8EA;transform:scaleX(0.8852);font-weight:bold;">посещение</span>
<span class="t " style="left:576.7px;top:134px;font-size:7.34px;line-height:9px;color:#FFF8EA;transform:scaleX(0.8856);font-weight:bold;">Не было уже</span>
<span class="t " style="left:632.7px;top:134px;font-size:7.34px;line-height:9px;color:#FFF8EA;transform:scaleX(0.9588);font-weight:bold;">Услуга/Группа</span>
<span class="t " style="left:688px;top:134px;font-size:7.34px;line-height:9px;color:#FFF8EA;transform:scaleX(0.8864);font-weight:bold;">Специалист</span>
<div class="cell" style="left:158px;top:147px;width:82px;height:9px;line-height:9px;font-size:8.0px;color:#111;"><span style="display:inline-block;transform-origin:0 50%;transform:scaleX(0.9898);">Красуня</span></div>
<div class="cell" style="left:242px;top:147px;width:53px;height:9px;line-height:9px;font-size:8.0px;color:#2A2AF5;"><span style="display:inline-block;transform-origin:0 50%;transform:scaleX(1.0000);">Алексеев</span></div>
<div class="cell" style="left:297.5px;top:147px;width:53.5px;height:9px;line-height:9px;font-size:8.2px;color:#111;"><span style="display:inline-block;transform-origin:0 50%;transform:scaleX(0.8450);">+7 (948)</span></div>
<div class="cell" style="left:354px;top:147px;width:53px;height:9px;line-height:9px;font-size:8.0px;color:#111;"><span style="display:inline-block;transform-origin:0 50%;transform:scaleX(1.0000);">нет</span></div>
<div class="cell" style="left:502px;top:147px;width:71px;height:9px;line-height:9px;font-size:8.2px;color:#111;"><span style="display:inline-block;transform-origin:0 50%;transform:scaleX(0.8607);">07.11.2018</span></div>
<div class="cell" style="left:575.9px;top:147px;width:53.3px;height:9px;line-height:9px;font-size:8.0px;color:#111;"><span style="display:inline-block;transform-origin:0 50%;transform:scaleX(0.9500);">1 месяц</span></div>
<div class="cell" style="left:631.9px;top:147px;width:53.0px;height:9px;line-height:9px;font-size:8.0px;color:#111;"><span style="display:inline-block;transform-origin:0 50%;transform:scaleX(0.9850);">Массаж</span></div>
<div class="cell" style="left:687.9px;top:147px;width:57.1px;height:9px;line-height:9px;font-size:8.0px;color:#111;"><span style="display:inline-block;transform-origin:0 50%;transform:scaleX(0.9500);">АБ Валерия</span></div>
<div class="cell" style="left:158px;top:157px;width:82px;height:9px;line-height:9px;font-size:8.0px;color:#111;"><span style="display:inline-block;transform-origin:0 50%;transform:scaleX(0.9898);">Красуня</span></div>
<div class="cell" style="left:242px;top:157px;width:53px;height:9px;line-height:9px;font-size:8.0px;color:#2A2AF5;"><span style="display:inline-block;transform-origin:0 50%;transform:scaleX(1.0000);">Андреев</span></div>
<div class="cell" style="left:297.5px;top:157px;width:53.5px;height:9px;line-height:9px;font-size:8.2px;color:#111;"><span style="display:inline-block;transform-origin:0 50%;transform:scaleX(0.8450);">+7 (948)</span></div>
<div class="cell" style="left:354px;top:157px;width:53px;height:9px;line-height:9px;font-size:8.0px;color:#111;"><span style="display:inline-block;transform-origin:0 50%;transform:scaleX(1.0000);">нет</span></div>
<div class="cell" style="left:502px;top:157px;width:71px;height:9px;line-height:9px;font-size:8.2px;color:#111;"><span style="display:inline-block;transform-origin:0 50%;transform:scaleX(0.8607);">21.11.2018</span></div>
<div class="cell" style="left:575.9px;top:157px;width:53.3px;height:9px;line-height:9px;font-size:8.0px;color:#111;"><span style="display:inline-block;transform-origin:0 50%;transform:scaleX(0.9500);">16 дней</span></div>
<div class="cell" style="left:631.9px;top:157px;width:53.0px;height:9px;line-height:9px;font-size:8.0px;color:#111;"><span style="display:inline-block;transform-origin:0 50%;transform:scaleX(0.9850);">Маникюр</span></div>
<div class="cell" style="left:687.9px;top:157px;width:57.1px;height:9px;line-height:9px;font-size:8.0px;color:#111;"><span style="display:inline-block;transform-origin:0 50%;transform:scaleX(0.9500);">Ткачук</span></div>
<div class="cell" style="left:158px;top:167px;width:82px;height:9px;line-height:9px;font-size:8.0px;color:#111;"><span style="display:inline-block;transform-origin:0 50%;transform:scaleX(0.9898);">Красуня</span></div>
<div class="cell" style="left:242px;top:167px;width:53px;height:9px;line-height:9px;font-size:8.0px;color:#2A2AF5;"><span style="display:inline-block;transform-origin:0 50%;transform:scaleX(1.0000);">Анисимов</span></div>
<div class="cell" style="left:297.5px;top:167px;width:53.5px;height:9px;line-height:9px;font-size:8.2px;color:#111;"><span style="display:inline-block;transform-origin:0 50%;transform:scaleX(0.8450);">+7 (968)</span></div>
<div class="cell" style="left:354px;top:167px;width:53px;height:9px;line-height:9px;font-size:8.0px;color:#111;"><span style="display:inline-block;transform-origin:0 50%;transform:scaleX(1.0000);">нет</span></div>
<div class="cell" style="left:502px;top:167px;width:71px;height:9px;line-height:9px;font-size:8.2px;color:#111;"><span style="display:inline-block;transform-origin:0 50%;transform:scaleX(0.8607);">07.11.2018</span></div>
<div class="cell" style="left:575.9px;top:167px;width:53.3px;height:9px;line-height:9px;font-size:8.0px;color:#111;"><span style="display:inline-block;transform-origin:0 50%;transform:scaleX(0.9500);">1 месяц</span></div>
<div class="cell" style="left:631.9px;top:167px;width:53.0px;height:9px;line-height:9px;font-size:8.0px;color:#111;"><span style="display:inline-block;transform-origin:0 50%;transform:scaleX(0.9850);">Массаж</span></div>
<div class="cell" style="left:687.9px;top:167px;width:57.1px;height:9px;line-height:9px;font-size:8.0px;color:#111;"><span style="display:inline-block;transform-origin:0 50%;transform:scaleX(0.9500);">Шевченко</span></div>
<div class="cell" style="left:158px;top:177px;width:82px;height:9px;line-height:9px;font-size:8.0px;color:#111;"><span style="display:inline-block;transform-origin:0 50%;transform:scaleX(0.9898);">Красуня</span></div>
<div class="cell" style="left:242px;top:177px;width:53px;height:9px;line-height:9px;font-size:8.0px;color:#2A2AF5;"><span style="display:inline-block;transform-origin:0 50%;transform:scaleX(1.0000);">Антонов</span></div>
<div class="cell" style="left:297.5px;top:177px;width:53.5px;height:9px;line-height:9px;font-size:8.2px;color:#111;"><span style="display:inline-block;transform-origin:0 50%;transform:scaleX(0.8450);">+7 (968)</span></div>
<div class="cell" style="left:354px;top:177px;width:53px;height:9px;line-height:9px;font-size:8.0px;color:#111;"><span style="display:inline-block;transform-origin:0 50%;transform:scaleX(1.0000);">нет</span></div>
<div class="cell" style="left:502px;top:177px;width:71px;height:9px;line-height:9px;font-size:8.2px;color:#111;"><span style="display:inline-block;transform-origin:0 50%;transform:scaleX(0.8479);">14.06.2018</span></div>
<div class="cell" style="left:575.9px;top:177px;width:53.3px;height:9px;line-height:9px;font-size:8.0px;color:#111;"><span style="display:inline-block;transform-origin:0 50%;transform:scaleX(0.9500);">5 месяцев 23</span></div>
<div class="cell" style="left:631.9px;top:177px;width:53.0px;height:9px;line-height:9px;font-size:8.0px;color:#111;"><span style="display:inline-block;transform-origin:0 50%;transform:scaleX(0.9850);">Колорирование</span></div>
<div class="cell" style="left:687.9px;top:177px;width:57.1px;height:9px;line-height:9px;font-size:8.0px;color:#111;"><span style="display:inline-block;transform-origin:0 50%;transform:scaleX(0.9500);">Бондар</span></div>
<div class="cell" style="left:158px;top:187px;width:82px;height:9px;line-height:9px;font-size:8.0px;color:#111;"><span style="display:inline-block;transform-origin:0 50%;transform:scaleX(0.9898);">Красуня</span></div>
<div class="cell" style="left:242px;top:187px;width:53px;height:9px;line-height:9px;font-size:8.0px;color:#2A2AF5;"><span style="display:inline-block;transform-origin:0 50%;transform:scaleX(1.0000);">Баранов</span></div>
<div class="cell" style="left:297.5px;top:187px;width:53.5px;height:9px;line-height:9px;font-size:8.2px;color:#111;"><span style="display:inline-block;transform-origin:0 50%;transform:scaleX(0.8450);">+7 (948)</span></div>
<div class="cell" style="left:354px;top:187px;width:53px;height:9px;line-height:9px;font-size:8.0px;color:#111;"><span style="display:inline-block;transform-origin:0 50%;transform:scaleX(1.0000);">нет</span></div>
<div class="cell" style="left:502px;top:187px;width:71px;height:9px;line-height:9px;font-size:8.2px;color:#111;"><span style="display:inline-block;transform-origin:0 50%;transform:scaleX(0.8607);">07.11.2018</span></div>
<div class="cell" style="left:575.9px;top:187px;width:53.3px;height:9px;line-height:9px;font-size:8.0px;color:#111;"><span style="display:inline-block;transform-origin:0 50%;transform:scaleX(0.9500);">1 месяц</span></div>
<div class="cell" style="left:631.9px;top:187px;width:53.0px;height:9px;line-height:9px;font-size:8.0px;color:#111;"><span style="display:inline-block;transform-origin:0 50%;transform:scaleX(0.9850);">Гидромассаж</span></div>
<div class="cell" style="left:687.9px;top:187px;width:57.1px;height:9px;line-height:9px;font-size:8.0px;color:#111;"><span style="display:inline-block;transform-origin:0 50%;transform:scaleX(0.9500);">Бондаренко</span></div>
<div class="cell" style="left:158px;top:197px;width:82px;height:9px;line-height:9px;font-size:8.0px;color:#111;"><span style="display:inline-block;transform-origin:0 50%;transform:scaleX(0.9898);">Красуня</span></div>
<div class="cell" style="left:242px;top:197px;width:53px;height:9px;line-height:9px;font-size:8.0px;color:#2A2AF5;"><span style="display:inline-block;transform-origin:0 50%;transform:scaleX(1.0000);">Белов</span></div>
<div class="cell" style="left:297.5px;top:197px;width:53.5px;height:9px;line-height:9px;font-size:8.2px;color:#111;"><span style="display:inline-block;transform-origin:0 50%;transform:scaleX(0.8450);">+7 (958)</span></div>
<div class="cell" style="left:354px;top:197px;width:53px;height:9px;line-height:9px;font-size:8.0px;color:#111;"><span style="display:inline-block;transform-origin:0 50%;transform:scaleX(1.0000);">нет</span></div>
<div class="cell" style="left:502px;top:197px;width:71px;height:9px;line-height:9px;font-size:8.2px;color:#111;"><span style="display:inline-block;transform-origin:0 50%;transform:scaleX(0.8479);">13.06.2018</span></div>
<div class="cell" style="left:575.9px;top:197px;width:53.3px;height:9px;line-height:9px;font-size:8.0px;color:#111;"><span style="display:inline-block;transform-origin:0 50%;transform:scaleX(0.9500);">5 месяцев 24</span></div>
<div class="cell" style="left:631.9px;top:197px;width:53.0px;height:9px;line-height:9px;font-size:8.0px;color:#111;"><span style="display:inline-block;transform-origin:0 50%;transform:scaleX(0.9850);">Колорирование</span></div>
<div class="cell" style="left:687.9px;top:197px;width:57.1px;height:9px;line-height:9px;font-size:8.0px;color:#111;"><span style="display:inline-block;transform-origin:0 50%;transform:scaleX(0.9500);">Бондар</span></div>
<div class="cell" style="left:158px;top:207px;width:82px;height:9px;line-height:9px;font-size:8.0px;color:#111;"><span style="display:inline-block;transform-origin:0 50%;transform:scaleX(0.9898);">Красуня</span></div>
<div class="cell" style="left:242px;top:207px;width:53px;height:9px;line-height:9px;font-size:8.0px;color:#2A2AF5;"><span style="display:inline-block;transform-origin:0 50%;transform:scaleX(1.0000);">Белоус</span></div>
<div class="cell" style="left:297.5px;top:207px;width:53.5px;height:9px;line-height:9px;font-size:8.2px;color:#111;"><span style="display:inline-block;transform-origin:0 50%;transform:scaleX(0.8450);">+7 (968)</span></div>
<div class="cell" style="left:354px;top:207px;width:53px;height:9px;line-height:9px;font-size:8.0px;color:#111;"><span style="display:inline-block;transform-origin:0 50%;transform:scaleX(1.0000);">нет</span></div>
<div class="cell" style="left:502px;top:207px;width:71px;height:9px;line-height:9px;font-size:8.2px;color:#111;"><span style="display:inline-block;transform-origin:0 50%;transform:scaleX(0.8607);">07.11.2018</span></div>
<div class="cell" style="left:575.9px;top:207px;width:53.3px;height:9px;line-height:9px;font-size:8.0px;color:#111;"><span style="display:inline-block;transform-origin:0 50%;transform:scaleX(0.9500);">1 месяц</span></div>
<div class="cell" style="left:631.9px;top:207px;width:53.0px;height:9px;line-height:9px;font-size:8.0px;color:#111;"><span style="display:inline-block;transform-origin:0 50%;transform:scaleX(0.9850);">Мытье волос</span></div>
<div class="cell" style="left:687.9px;top:207px;width:57.1px;height:9px;line-height:9px;font-size:8.0px;color:#111;"><span style="display:inline-block;transform-origin:0 50%;transform:scaleX(0.9500);">Иванова</span></div>
<div class="cell" style="left:158px;top:217px;width:82px;height:9px;line-height:9px;font-size:8.0px;color:#111;"><span style="display:inline-block;transform-origin:0 50%;transform:scaleX(0.9898);">Красуня</span></div>
<div class="cell" style="left:242px;top:217px;width:53px;height:9px;line-height:9px;font-size:8.0px;color:#2A2AF5;"><span style="display:inline-block;transform-origin:0 50%;transform:scaleX(1.0000);">Бирюков</span></div>
<div class="cell" style="left:297.5px;top:217px;width:53.5px;height:9px;line-height:9px;font-size:8.2px;color:#111;"><span style="display:inline-block;transform-origin:0 50%;transform:scaleX(0.8450);">+7 (948)</span></div>
<div class="cell" style="left:354px;top:217px;width:53px;height:9px;line-height:9px;font-size:8.0px;color:#111;"><span style="display:inline-block;transform-origin:0 50%;transform:scaleX(1.0000);">нет</span></div>
<div class="cell" style="left:502px;top:217px;width:71px;height:9px;line-height:9px;font-size:8.2px;color:#111;"><span style="display:inline-block;transform-origin:0 50%;transform:scaleX(0.8479);">17.04.2018</span></div>
<div class="cell" style="left:575.9px;top:217px;width:53.3px;height:9px;line-height:9px;font-size:8.0px;color:#111;"><span style="display:inline-block;transform-origin:0 50%;transform:scaleX(0.9500);">7 месяцев 20</span></div>
<div class="cell" style="left:631.9px;top:217px;width:53.0px;height:9px;line-height:9px;font-size:8.0px;color:#111;"><span style="display:inline-block;transform-origin:0 50%;transform:scaleX(0.9850);">Маникюр</span></div>
<div class="cell" style="left:687.9px;top:217px;width:57.1px;height:9px;line-height:9px;font-size:8.0px;color:#111;"><span style="display:inline-block;transform-origin:0 50%;transform:scaleX(0.9500);">Ткачук</span></div>
<div class="cell" style="left:158px;top:227px;width:82px;height:9px;line-height:9px;font-size:8.0px;color:#111;"><span style="display:inline-block;transform-origin:0 50%;transform:scaleX(0.9898);">Красуня</span></div>
<div class="cell" style="left:242px;top:227px;width:53px;height:9px;line-height:9px;font-size:8.0px;color:#2A2AF5;"><span style="display:inline-block;transform-origin:0 50%;transform:scaleX(1.0000);">Богданов</span></div>
<div class="cell" style="left:297.5px;top:227px;width:53.5px;height:9px;line-height:9px;font-size:8.2px;color:#111;"><span style="display:inline-block;transform-origin:0 50%;transform:scaleX(0.8450);">+7 (958)</span></div>
<div class="cell" style="left:354px;top:227px;width:53px;height:9px;line-height:9px;font-size:8.0px;color:#111;"><span style="display:inline-block;transform-origin:0 50%;transform:scaleX(1.0000);">нет</span></div>
<div class="cell" style="left:502px;top:227px;width:71px;height:9px;line-height:9px;font-size:8.2px;color:#111;"><span style="display:inline-block;transform-origin:0 50%;transform:scaleX(0.8479);">17.04.2018</span></div>
<div class="cell" style="left:575.9px;top:227px;width:53.3px;height:9px;line-height:9px;font-size:8.0px;color:#111;"><span style="display:inline-block;transform-origin:0 50%;transform:scaleX(0.9500);">7 месяцев 20</span></div>
<div class="cell" style="left:631.9px;top:227px;width:53.0px;height:9px;line-height:9px;font-size:8.0px;color:#111;"><span style="display:inline-block;transform-origin:0 50%;transform:scaleX(0.9850);">Ламинирование</span></div>
<div class="cell" style="left:687.9px;top:227px;width:57.1px;height:9px;line-height:9px;font-size:8.0px;color:#111;"><span style="display:inline-block;transform-origin:0 50%;transform:scaleX(0.9500);">Бондар</span></div>
<div class="cell" style="left:158px;top:237px;width:82px;height:9px;line-height:9px;font-size:8.0px;color:#111;"><span style="display:inline-block;transform-origin:0 50%;transform:scaleX(0.9898);">Красуня</span></div>
<div class="cell" style="left:242px;top:237px;width:53px;height:9px;line-height:9px;font-size:8.0px;color:#2A2AF5;"><span style="display:inline-block;transform-origin:0 50%;transform:scaleX(1.0000);">Валентина</span></div>
<div class="cell" style="left:297.5px;top:237px;width:53.5px;height:9px;line-height:9px;font-size:8.2px;color:#111;"><span style="display:inline-block;transform-origin:0 50%;transform:scaleX(0.8450);">+7 (499)</span></div>
<div class="cell" style="left:354px;top:237px;width:53px;height:9px;line-height:9px;font-size:8.0px;color:#111;"><span style="display:inline-block;transform-origin:0 50%;transform:scaleX(1.0000);">нет</span></div>
<div class="cell" style="left:502px;top:237px;width:71px;height:9px;line-height:9px;font-size:8.2px;color:#111;"><span style="display:inline-block;transform-origin:0 50%;transform:scaleX(0.8479);">18.05.2018</span></div>
<div class="cell" style="left:575.9px;top:237px;width:53.3px;height:9px;line-height:9px;font-size:8.0px;color:#111;"><span style="display:inline-block;transform-origin:0 50%;transform:scaleX(0.9500);">6 месяцев 19</span></div>
<div class="cell" style="left:631.9px;top:237px;width:53.0px;height:9px;line-height:9px;font-size:8.0px;color:#111;"><span style="display:inline-block;transform-origin:0 50%;transform:scaleX(0.9850);">Shellac</span></div>
<div class="cell" style="left:687.9px;top:237px;width:57.1px;height:9px;line-height:9px;font-size:8.0px;color:#111;"><span style="display:inline-block;transform-origin:0 50%;transform:scaleX(0.9500);">Мельник</span></div>
<div class="cell" style="left:158px;top:248px;width:82px;height:9px;line-height:9px;font-size:8.0px;color:#111;"><span style="display:inline-block;transform-origin:0 50%;transform:scaleX(0.9898);">Красуня</span></div>
<div class="cell" style="left:242px;top:248px;width:53px;height:9px;line-height:9px;font-size:8.0px;color:#2A2AF5;"><span style="display:inline-block;transform-origin:0 50%;transform:scaleX(1.0000);">Веселов</span></div>
<div class="cell" style="left:297.5px;top:248px;width:53.5px;height:9px;line-height:9px;font-size:8.2px;color:#111;"><span style="display:inline-block;transform-origin:0 50%;transform:scaleX(0.8450);">+7 (968)</span></div>
<div class="cell" style="left:354px;top:248px;width:53px;height:9px;line-height:9px;font-size:8.0px;color:#111;"><span style="display:inline-block;transform-origin:0 50%;transform:scaleX(1.0000);">нет</span></div>
<div class="cell" style="left:502px;top:248px;width:71px;height:9px;line-height:9px;font-size:8.2px;color:#111;"><span style="display:inline-block;transform-origin:0 50%;transform:scaleX(0.8607);">07.11.2018</span></div>
<div class="cell" style="left:575.9px;top:248px;width:53.3px;height:9px;line-height:9px;font-size:8.0px;color:#111;"><span style="display:inline-block;transform-origin:0 50%;transform:scaleX(0.9500);">1 месяц</span></div>
<div class="cell" style="left:631.9px;top:248px;width:53.0px;height:9px;line-height:9px;font-size:8.0px;color:#111;"><span style="display:inline-block;transform-origin:0 50%;transform:scaleX(0.9850);">Маникюр</span></div>
<div class="cell" style="left:687.9px;top:248px;width:57.1px;height:9px;line-height:9px;font-size:8.0px;color:#111;"><span style="display:inline-block;transform-origin:0 50%;transform:scaleX(0.9500);">Мельник</span></div>
<div class="cell" style="left:158px;top:258px;width:82px;height:9px;line-height:9px;font-size:8.0px;color:#111;"><span style="display:inline-block;transform-origin:0 50%;transform:scaleX(0.9898);">Красуня</span></div>
<div class="cell" style="left:242px;top:258px;width:53px;height:9px;line-height:9px;font-size:8.0px;color:#2A2AF5;"><span style="display:inline-block;transform-origin:0 50%;transform:scaleX(1.0000);">Егоров</span></div>
<div class="cell" style="left:297.5px;top:258px;width:53.5px;height:9px;line-height:9px;font-size:8.2px;color:#111;"><span style="display:inline-block;transform-origin:0 50%;transform:scaleX(0.8450);">+7 (968)</span></div>
<div class="cell" style="left:354px;top:258px;width:53px;height:9px;line-height:9px;font-size:8.0px;color:#111;"><span style="display:inline-block;transform-origin:0 50%;transform:scaleX(1.0000);">нет</span></div>
<div class="cell" style="left:502px;top:258px;width:71px;height:9px;line-height:9px;font-size:8.2px;color:#111;"><span style="display:inline-block;transform-origin:0 50%;transform:scaleX(0.8607);">07.11.2018</span></div>
<div class="cell" style="left:575.9px;top:258px;width:53.3px;height:9px;line-height:9px;font-size:8.0px;color:#111;"><span style="display:inline-block;transform-origin:0 50%;transform:scaleX(0.9500);">1 месяц</span></div>
<div class="cell" style="left:631.9px;top:258px;width:53.0px;height:9px;line-height:9px;font-size:8.0px;color:#111;"><span style="display:inline-block;transform-origin:0 50%;transform:scaleX(0.9850);">Парафинотерапия</span></div>
<div class="cell" style="left:687.9px;top:258px;width:57.1px;height:9px;line-height:9px;font-size:8.0px;color:#111;"><span style="display:inline-block;transform-origin:0 50%;transform:scaleX(0.9500);">Ткачук</span></div>
<div class="cell" style="left:158px;top:268px;width:82px;height:9px;line-height:9px;font-size:8.0px;color:#111;"><span style="display:inline-block;transform-origin:0 50%;transform:scaleX(0.9898);">Красуня</span></div>
<div class="cell" style="left:242px;top:268px;width:53px;height:9px;line-height:9px;font-size:8.0px;color:#2A2AF5;"><span style="display:inline-block;transform-origin:0 50%;transform:scaleX(1.0000);">Иванов</span></div>
<div class="cell" style="left:297.5px;top:268px;width:53.5px;height:9px;line-height:9px;font-size:8.2px;color:#111;"><span style="display:inline-block;transform-origin:0 50%;transform:scaleX(0.8450);">+7 (958)</span></div>
<div class="cell" style="left:354px;top:268px;width:53px;height:9px;line-height:9px;font-size:8.0px;color:#111;"><span style="display:inline-block;transform-origin:0 50%;transform:scaleX(1.0000);">нет</span></div>
<div class="cell" style="left:502px;top:268px;width:71px;height:9px;line-height:9px;font-size:8.2px;color:#111;"><span style="display:inline-block;transform-origin:0 50%;transform:scaleX(0.8479);">07.05.2018</span></div>
<div class="cell" style="left:575.9px;top:268px;width:53.3px;height:9px;line-height:9px;font-size:8.0px;color:#111;"><span style="display:inline-block;transform-origin:0 50%;transform:scaleX(0.9500);">7 месяцев</span></div>
<div class="cell" style="left:631.9px;top:268px;width:53.0px;height:9px;line-height:9px;font-size:8.0px;color:#111;"><span style="display:inline-block;transform-origin:0 50%;transform:scaleX(0.9850);">Колорирование</span></div>
<div class="cell" style="left:687.9px;top:268px;width:57.1px;height:9px;line-height:9px;font-size:8.0px;color:#111;"><span style="display:inline-block;transform-origin:0 50%;transform:scaleX(0.9500);">Бондар</span></div>
<div class="cell" style="left:158px;top:278px;width:82px;height:9px;line-height:9px;font-size:8.0px;color:#111;"><span style="display:inline-block;transform-origin:0 50%;transform:scaleX(0.9898);">Красуня</span></div>
<div class="cell" style="left:242px;top:278px;width:53px;height:9px;line-height:9px;font-size:8.0px;color:#2A2AF5;"><span style="display:inline-block;transform-origin:0 50%;transform:scaleX(1.0000);">Комаров</span></div>
<div class="cell" style="left:297.5px;top:278px;width:53.5px;height:9px;line-height:9px;font-size:8.2px;color:#111;"><span style="display:inline-block;transform-origin:0 50%;transform:scaleX(0.8450);">+7 (948)</span></div>
<div class="cell" style="left:354px;top:278px;width:53px;height:9px;line-height:9px;font-size:8.0px;color:#111;"><span style="display:inline-block;transform-origin:0 50%;transform:scaleX(1.0000);">нет</span></div>
<div class="cell" style="left:502px;top:278px;width:71px;height:9px;line-height:9px;font-size:8.2px;color:#111;"><span style="display:inline-block;transform-origin:0 50%;transform:scaleX(0.8607);">13.11.2018</span></div>
<div class="cell" style="left:575.9px;top:278px;width:53.3px;height:9px;line-height:9px;font-size:8.0px;color:#111;"><span style="display:inline-block;transform-origin:0 50%;transform:scaleX(0.9500);">24 дня</span></div>
<div class="cell" style="left:631.9px;top:278px;width:53.0px;height:9px;line-height:9px;font-size:8.0px;color:#111;"><span style="display:inline-block;transform-origin:0 50%;transform:scaleX(0.9850);">Колорирование</span></div>
<div class="cell" style="left:687.9px;top:278px;width:57.1px;height:9px;line-height:9px;font-size:8.0px;color:#111;"><span style="display:inline-block;transform-origin:0 50%;transform:scaleX(0.9500);">АВ Татьяна</span></div>
<div style="position:absolute;left:156.8px;top:287px;width:583.9px;height:9.6px;background:#FFA014;"></div>
<div style="position:absolute;left:240.29999999999998px;top:287px;width:0.8px;height:9.6px;background:#FFC878;"></div>
<div style="position:absolute;left:294.90000000000003px;top:287px;width:0.8px;height:9.6px;background:#FFC878;"></div>
<div style="position:absolute;left:350.90000000000003px;top:287px;width:0.8px;height:9.6px;background:#FFC878;"></div>
<div style="position:absolute;left:406.90000000000003px;top:287px;width:0.8px;height:9.6px;background:#FFC878;"></div>
<div style="position:absolute;left:455.5px;top:287px;width:0.8px;height:9.6px;background:#FFC878;"></div>
<div style="position:absolute;left:498.90000000000003px;top:287px;width:0.8px;height:9.6px;background:#FFC878;"></div>
<div style="position:absolute;left:573.1px;top:287px;width:0.8px;height:9.6px;background:#FFC878;"></div>
<div style="position:absolute;left:629.1px;top:287px;width:0.8px;height:9.6px;background:#FFC878;"></div>
<div style="position:absolute;left:685.1px;top:287px;width:0.8px;height:9.6px;background:#FFC878;"></div>
<span class="t " style="left:158.4px;top:288px;font-size:7.34px;line-height:9px;color:#111;transform:scaleX(0.9389);font-weight:bold;">Всего (14)</span>
<svg style="left:719px;top:356.7px" width="26.8" height="26.8" viewBox="0 0 268 268"><circle cx="134" cy="134" r="131" fill="#1192E0"/><path d="M87 63h101a12 12 0 0 1 12 12v130l-20-15H87a12 12 0 0 1-12-12V75a12 12 0 0 1 12-12z" fill="#fff"/><path d="M95 156q38 16 72 0" stroke="#1192E0" stroke-width="7" fill="none" stroke-linecap="round"/></svg>
</body></html>
